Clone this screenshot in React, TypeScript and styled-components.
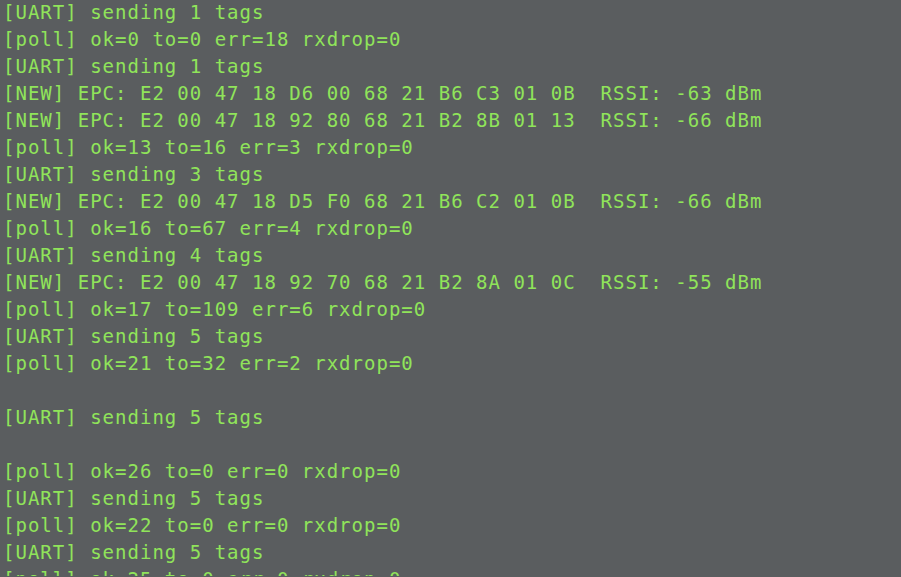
import React from "react";
import styled, { createGlobalStyle } from "styled-components";

const Global = createGlobalStyle`
  html, body { margin: 0; padding: 0; background: #5a5d5f; overflow: hidden; }
  body { width: 901px; height: 577px; }
`;

const Terminal = styled.div`
  width: 901px;
  height: 577px;
  background: #5a5d5f;
  overflow: hidden;
  display: flex;
  flex-direction: column;
  padding: 0 0 0 3px;
  margin-top: -1px;
  box-sizing: border-box;
`;

const Line = styled.div`
  font-family: "DejaVu Sans Mono", "Liberation Mono", monospace;
  font-size: 19px;
  letter-spacing: 1.01px;
  line-height: 27px;
  height: 27px;
  color: #90e45a;
  white-space: pre;
  flex: none;
`;

const lines = [
  "[UART] sending 1 tags",
  "[poll] ok=0 to=0 err=18 rxdrop=0",
  "[UART] sending 1 tags",
  "[NEW] EPC: E2 00 47 18 D6 00 68 21 B6 C3 01 0B  RSSI: -63 dBm",
  "[NEW] EPC: E2 00 47 18 92 80 68 21 B2 8B 01 13  RSSI: -66 dBm",
  "[poll] ok=13 to=16 err=3 rxdrop=0",
  "[UART] sending 3 tags",
  "[NEW] EPC: E2 00 47 18 D5 F0 68 21 B6 C2 01 0B  RSSI: -66 dBm",
  "[poll] ok=16 to=67 err=4 rxdrop=0",
  "[UART] sending 4 tags",
  "[NEW] EPC: E2 00 47 18 92 70 68 21 B2 8A 01 0C  RSSI: -55 dBm",
  "[poll] ok=17 to=109 err=6 rxdrop=0",
  "[UART] sending 5 tags",
  "[poll] ok=21 to=32 err=2 rxdrop=0",
  "",
  "[UART] sending 5 tags",
  "",
  "[poll] ok=26 to=0 err=0 rxdrop=0",
  "[UART] sending 5 tags",
  "[poll] ok=22 to=0 err=0 rxdrop=0",
  "[UART] sending 5 tags",
  "[poll] ok=25 to=0 err=0 rxdrop=0",
];

export default function App() {
  return (
    <>
      <Global />
      <Terminal>
        {lines.map((l, i) => (
          <Line key={i}>{l}</Line>
        ))}
      </Terminal>
    </>
  );
}
